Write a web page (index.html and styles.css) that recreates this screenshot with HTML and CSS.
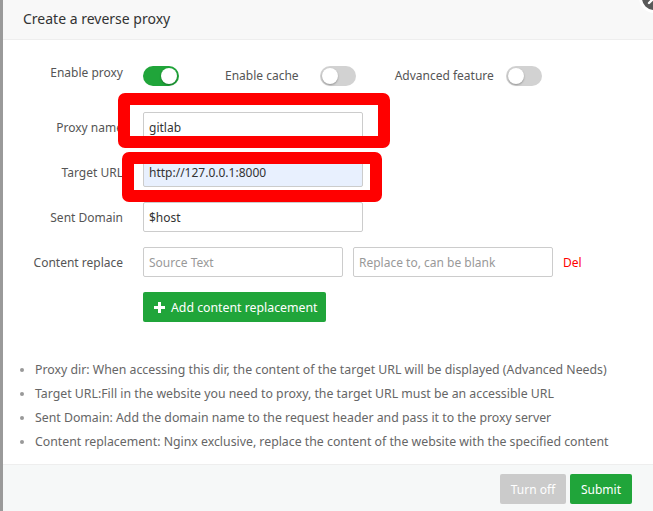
FILE: index.html
```html
<!DOCTYPE html>
<html>
<head>
<meta charset="utf-8">
<link rel="stylesheet" href="styles.css">
</head>
<body>
<div class="strip"></div>
<div class="dialog">
  <div class="header">Create a reverse proxy</div>
  <div class="content">
    <div class="row row-switches">
      <span class="label label-top">Enable proxy</span>
      <span class="switch on"><span class="knob"></span></span>
      <span class="sw-label cache-label">Enable cache</span>
      <span class="switch"><span class="knob"></span></span>
      <span class="sw-label adv-label">Advanced feature</span>
      <span class="switch adv-switch"><span class="knob"></span></span>
    </div>
    <div class="row">
      <span class="label">Proxy name</span>
      <input class="input" type="text" value="gitlab">
    </div>
    <div class="row">
      <span class="label">Target URL</span>
      <input class="input autofill" type="text" value="http://127.0.0.1:8000">
    </div>
    <div class="row">
      <span class="label">Sent Domain</span>
      <input class="input" type="text" value="$host">
    </div>
    <div class="row">
      <span class="label">Content replace</span>
      <input class="input small" type="text" placeholder="Source Text">
      <input class="input small second" type="text" placeholder="Replace to, can be blank">
      <span class="del">Del</span>
    </div>
    <div class="row">
      <span class="label"></span>
      <button class="btn-add"><svg width="11" height="11" viewBox="0 0 11 11"><path d="M4 0h3v4h4v3H7v4H4V7H0V4h4z" fill="#fff"/></svg>Add content replacement</button>
    </div>
    <ul class="tips">
      <li>Proxy dir: When accessing this dir, the content of the target URL will be displayed (Advanced Needs)</li>
      <li>Target URL:Fill in the website you need to proxy, the target URL must be an accessible URL</li>
      <li>Sent Domain: Add the domain name to the request header and pass it to the proxy server</li>
      <li>Content replacement: Nginx exclusive, replace the content of the website with the specified content</li>
    </ul>
  </div>
  <div class="footer">
    <button class="btn btn-off">Turn off</button>
    <button class="btn btn-submit">Submit</button>
  </div>
  <div class="mark mark1"></div>
  <div class="mark mark2"></div>
  <span class="close"><svg width="30" height="30" viewBox="0 0 30 30"><circle cx="15" cy="15" r="13.5" fill="#595959" stroke="#fff" stroke-width="3"/><path d="M10 10l10 10M20 10L10 20" stroke="#fff" stroke-width="2.4" stroke-linecap="round"/></svg></span>
</div>
</body>
</html>
```

FILE: styles.css
```css
html, body {
  margin: 0;
  padding: 0;
  height: 511px;
  overflow: hidden;
}
body {
  display: flex;
  background: #fff;
  font-family: "Noto Sans", "Open Sans", sans-serif;
  font-size: 12px;
  color: #555;
}
.strip {
  width: 3px;
  flex: none;
  background: #9a9a9a;
}
.dialog {
  position: relative;
  flex: 1;
  display: flex;
  flex-direction: column;
  height: 511px;
  background: #fff;
}
.header {
  height: 39px;
  line-height: 38px;
  padding-left: 20px;
  font-size: 14px;
  color: #333;
  background: #f8f8f8;
  border-bottom: 1px solid #eee;
  flex: none;
}
.content {
  flex: 1;
  padding: 26px 0 0 20px;
}
.row {
  display: flex;
  align-items: center;
  height: 30px;
  margin-bottom: 15px;
}
.row-switches {
  height: 31px;
  align-items: flex-start;
}
.label {
  width: 100px;
  flex: none;
  padding-right: 20px;
  text-align: right;
  color: #555;
}
.label-top {
  line-height: 14px;
}
.switch {
  position: relative;
  width: 36px;
  height: 20px;
  border-radius: 10px;
  background: #d2d2d2;
  flex: none;
}
.switch.on {
  background: #20a53a;
}
.knob {
  position: absolute;
  top: 2px;
  left: 2px;
  width: 16px;
  height: 16px;
  border-radius: 50%;
  background: #fff;
  box-shadow: 0 1px 2px rgba(0,0,0,0.3);
}
.switch.on .knob {
  left: 18px;
}
.sw-label {
  line-height: 20px;
  color: #555;
}
.cache-label {
  margin-left: 46px;
  margin-right: 21px;
}
.adv-label {
  margin-left: 39px;
  margin-right: 12px;
}
.input {
  box-sizing: border-box;
  width: 220px;
  height: 30px;
  border: 1px solid #ccc;
  border-radius: 2px;
  padding: 0 5px;
  font-family: inherit;
  font-size: 12px;
  color: #333;
  background: #fff;
  outline: none;
}
.input::placeholder {
  color: #999;
}
.input.autofill {
  background: #e8f0fe;
}
.input.small {
  width: 200px;
}
.input.second {
  margin-left: 10px;
}
.del {
  margin-left: 10px;
  color: #f00;
}
.btn-add {
  display: flex;
  align-items: center;
  gap: 6px;
  height: 30px;
  padding: 0 9px 0 11px;
  border: none;
  border-radius: 2px;
  background: #20a53a;
  color: #fff;
  font-family: inherit;
  font-size: 12.3px;
}
.tips {
  margin: 36px 0 0 0;
  padding-left: 12px;
  color: #666;
  font-size: 12.3px;
  line-height: 24px;
}
.tips li::marker {
  color: #999;
}
.footer {
  flex: none;
  height: 47px;
  box-sizing: border-box;
  border-top: 1px solid #eee;
  background: #f6f8f8;
  display: flex;
  justify-content: flex-end;
  align-items: flex-start;
  padding: 9px 21px 0 0;
  gap: 4px;
}
.btn {
  height: 30px;
  border: none;
  border-radius: 2px;
  color: #fff;
  font-family: inherit;
  font-size: 12px;
  padding: 0 10px;
}
.btn-off {
  width: 66px;
  background: #cbcbcb;
}
.btn-submit {
  width: 62px;
  background: #20a53a;
}
.mark {
  position: absolute;
  box-sizing: border-box;
  border: 12px solid #ff0000;
  border-radius: 7px;
}
.mark1 {
  left: 115px;
  top: 93px;
  width: 272px;
  height: 55px;
}
.mark2 {
  left: 119px;
  top: 152px;
  width: 260px;
  height: 50px;
}
.close {
  position: absolute;
  left: 636px;
  top: -17px;
  width: 30px;
  height: 30px;
}
```
